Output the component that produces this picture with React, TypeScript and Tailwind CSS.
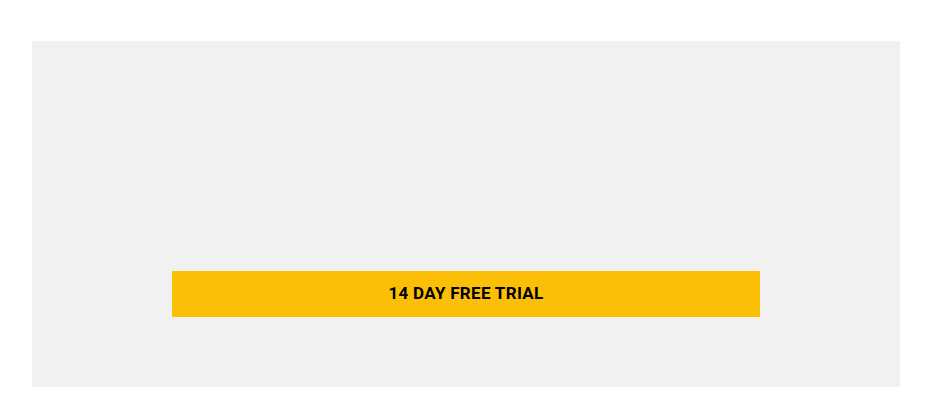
import React from 'react'

export default function App() {
  return (
    <div className="min-h-screen bg-white pt-[41px] pl-[32px] pr-[27px]">
      <section className="bg-[#f1f1f1] px-[140px] pt-[230px] pb-[70px]">
        <a
          href="#"
          className="flex h-[46px] items-center justify-center bg-[#fcbf07] text-[17px] font-bold uppercase tracking-[0.3px] text-black"
          style={{ fontFamily: 'Roboto, "Liberation Sans", sans-serif' }}
        >
          14 Day Free Trial
        </a>
      </section>
    </div>
  )
}
